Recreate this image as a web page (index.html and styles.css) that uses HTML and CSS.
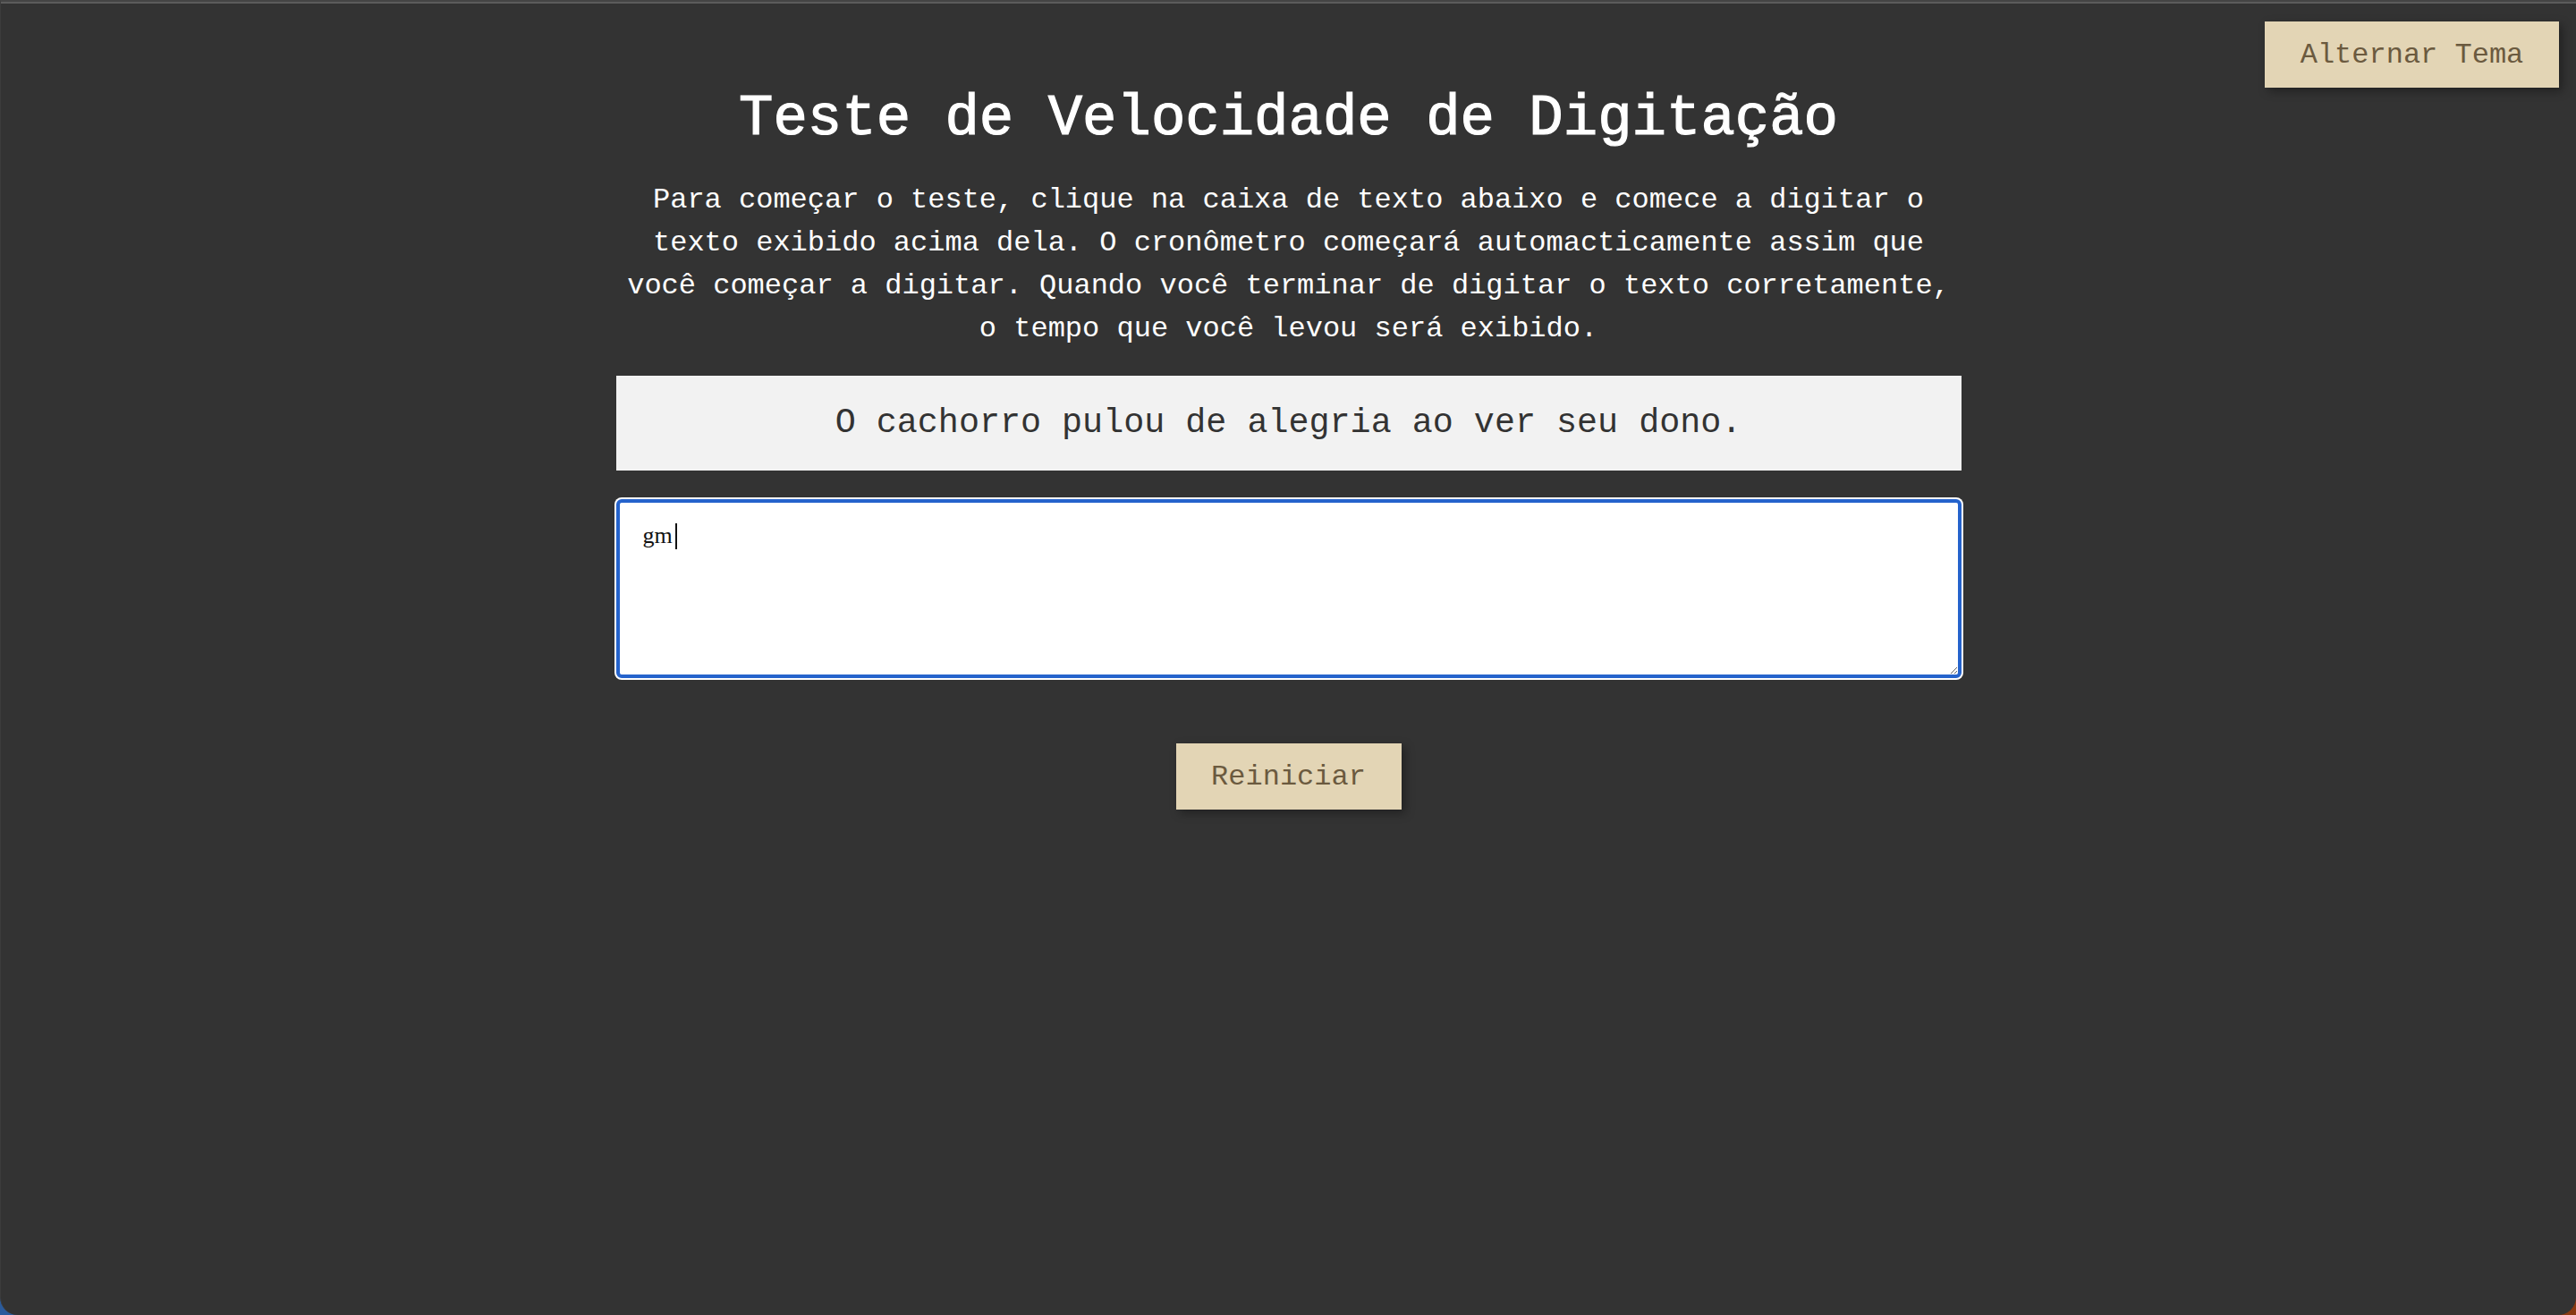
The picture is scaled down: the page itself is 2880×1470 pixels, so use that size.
FILE: index.html
```html
<!DOCTYPE html>
<html lang="pt-BR">
<head>
<meta charset="utf-8">
<title>Teste de Velocidade de Digitação</title>
<link rel="stylesheet" href="styles.css">
</head>
<body>
<div class="window">
  <button class="theme-toggle" type="button">Alternar Tema</button>
  <main class="container">
    <h1 class="title">Teste de Velocidade de Digitação</h1>
    <p class="instructions">Para começar o teste, clique na caixa de texto abaixo e comece a digitar o texto exibido acima dela. O cronômetro começará automacticamente assim que você começar a digitar. Quando você terminar de digitar o texto corretamente, o tempo que você levou será exibido.</p>
    <div class="sample">O cachorro pulou de alegria ao ver seu dono.</div>
    <div class="input-wrap">
      <textarea class="typing" spellcheck="false">gm</textarea>
      <span class="caret"></span>
    </div>
    <button class="restart" type="button">Reiniciar</button>
  </main>
</div>
</body>
</html>
```

FILE: styles.css
```css
html, body {
  margin: 0;
  padding: 0;
  height: 100%;
  overflow: hidden;
}

body {
  background: linear-gradient(90deg, #2b5b9c 0%, #3a4f7a 50%, #8a3a12 100%);
  font-family: "Liberation Mono", "Courier New", monospace;
}

.window {
  position: relative;
  height: 1470px;
  box-sizing: border-box;
  background: #333333;
  border-top: 2px solid #454545;
  border-left: 1px solid #3c3c3c;
  border-radius: 0 0 20px 20px;
  overflow: hidden;
}

.window::before {
  content: "";
  display: block;
  height: 2px;
  background: #5c5c5c;
}

.theme-toggle {
  position: absolute;
  top: 22px;
  right: 19px;
  width: 329px;
  height: 74px;
  padding: 0;
  border: none;
  background: #e3d5b5;
  color: #6b5a3f;
  font-family: "Liberation Mono", "Courier New", monospace;
  font-size: 32px;
  box-shadow: 4px 4px 10px rgba(0, 0, 0, 0.35);
}

.container {
  width: 1504px;
  margin: 0 auto;
  padding-top: 93px;
  display: flex;
  flex-direction: column;
  align-items: center;
}

.title {
  margin: 0;
  font-size: 64px;
  font-weight: normal;
  -webkit-text-stroke: 1.2px #ffffff;
  line-height: 72px;
  color: #ffffff;
  text-align: center;
}

.instructions {
  margin: 31px 0 0;
  font-size: 32px;
  line-height: 48px;
  color: #ffffff;
  text-align: center;
}

.sample {
  align-self: stretch;
  margin-top: 28px;
  height: 106px;
  display: flex;
  align-items: center;
  justify-content: center;
  background: #f2f2f2;
  color: #333333;
  font-size: 38.4px;
}

.input-wrap {
  position: relative;
  align-self: stretch;
  margin-top: 32px;
}

.typing {
  display: block;
  box-sizing: border-box;
  width: 100%;
  height: 200px;
  margin: 0;
  padding: 22px 26px;
  border: 4px solid #2563cc;
  border-radius: 6px;
  box-shadow: 0 0 0 2px #ffffff;
  outline: none;
  background: #ffffff;
  color: #111111;
  font-family: "Liberation Serif", serif;
  font-size: 26px;
  line-height: 30px;
  resize: vertical;
}

.caret {
  position: absolute;
  left: 66px;
  top: 27px;
  width: 2px;
  height: 29px;
  background: #111111;
}

.restart {
  margin-top: 73px;
  width: 252px;
  height: 74px;
  padding: 0;
  border: none;
  background: #e3d5b5;
  color: #6b5a3f;
  font-family: "Liberation Mono", "Courier New", monospace;
  font-size: 32px;
  box-shadow: 4px 4px 10px rgba(0, 0, 0, 0.35);
}
```
